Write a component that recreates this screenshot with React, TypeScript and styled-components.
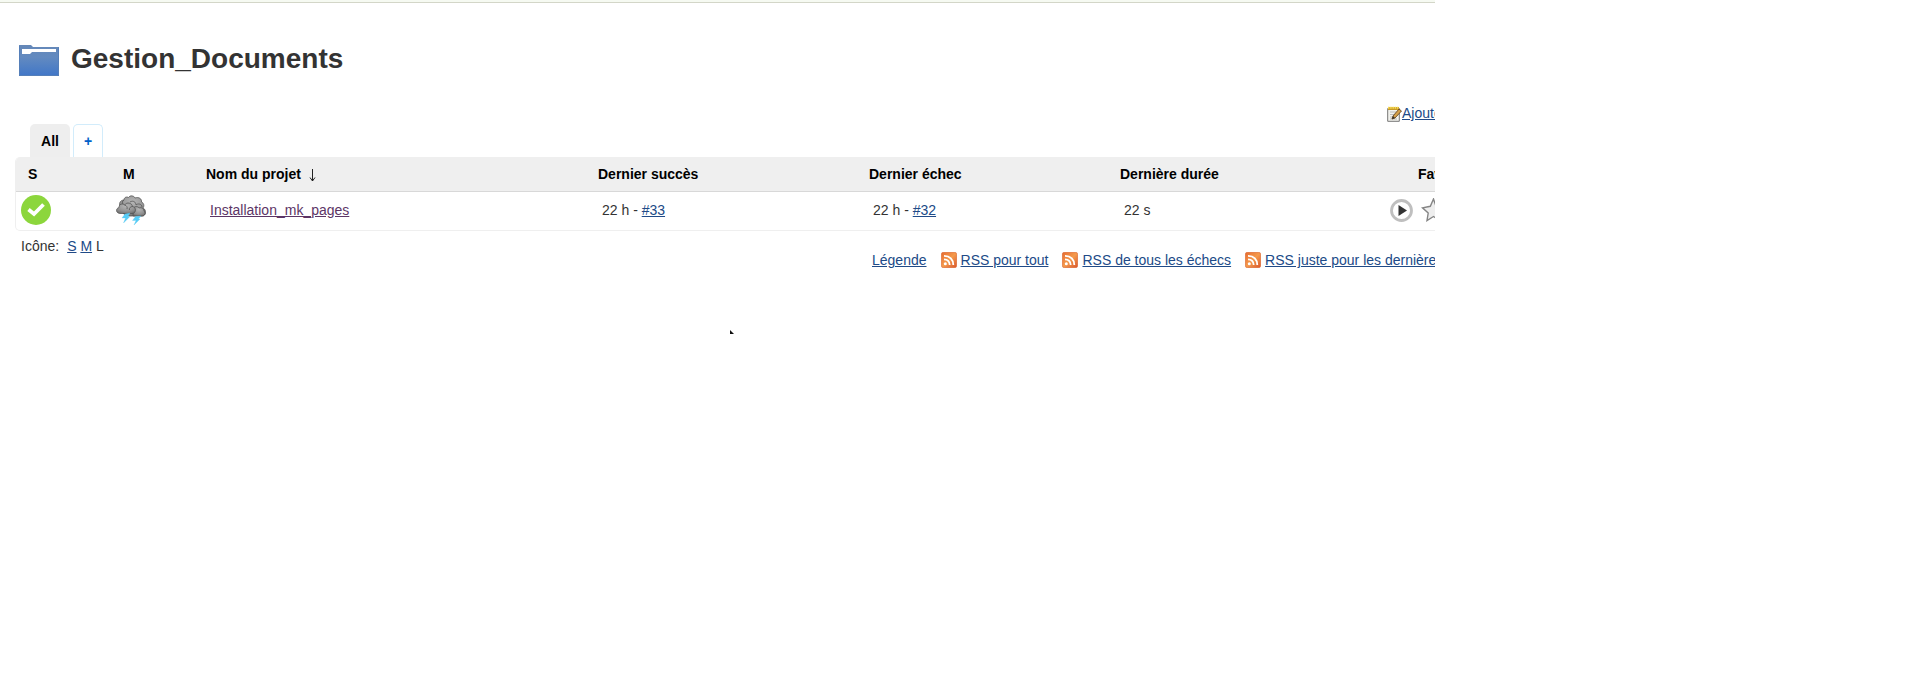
import React from "react";
import styled, { createGlobalStyle } from "styled-components";

const GlobalStyle = createGlobalStyle`
  body {
    margin: 0;
    background: #fff;
    color: #333;
    font: 14px/16px "Liberation Sans", Arial, sans-serif;
  }

  svg {
    flex-shrink: 0;
  }
`;

const Page = styled.main`
  position: relative;
  box-sizing: border-box;
  width: 1435px;
  height: 678px;
  overflow: hidden;
  white-space: nowrap;
  border-top: 2px solid #f6faf2;
`;

const TopRule = styled.div`
  height: 1px;
  background: #d3d6c8;
`;

const Heading = styled.header`
  display: flex;
  align-items: flex-start;
  padding: 42px 0 0 19px;
  height: 57px;
`;

const Title = styled.h1`
  margin: -2px 0 0 12px;
  font-size: 28px;
  line-height: 32px;
  color: #333;
`;

const Link = styled.a<{ $visited?: boolean }>`
  color: ${(p) => (p.$visited ? "#5c3566" : "#204a87")};
  text-decoration: underline;
`;

const EditRow = styled.div`
  display: flex;
  align-items: flex-start;
  height: 19px;
  padding: 3px 0 0 1387px;

  svg {
    margin-top: 1px;
  }
`;

const Tabs = styled.nav`
  display: flex;
  gap: 3px;
  height: 33px;
  padding-left: 30px;
`;

const Tab = styled.div<{ $active?: boolean }>`
  box-sizing: border-box;
  width: ${(p) => (p.$active ? 40 : 30)}px;
  height: 33px;
  padding-top: ${(p) => (p.$active ? 9 : 8)}px;
  border: ${(p) => (p.$active ? "0" : "1px solid #d2ecfb")};
  border-bottom: 0;
  border-radius: 5px 5px 0 0;
  background: ${(p) => (p.$active ? "#eee" : "#fff")};
  color: ${(p) => (p.$active ? "#000" : "#0061c9")};
  font-weight: bold;
  text-align: center;
`;

const Table = styled.section`
  box-sizing: border-box;
  margin-left: 15px;
  width: 1600px;
  height: 74px;
  border: 1px solid #efefef;
  border-top: 0;
  border-radius: 5px;
  overflow: hidden;
`;

const HeadRow = styled.div`
  display: grid;
  grid-template-columns: 95px 83px 392px 271px 251px 285px 1fr;
  align-items: center;
  box-sizing: border-box;
  height: 35px;
  padding-left: 12px;
  background: #efefef;
  border-bottom: 1px solid #d8d8d8;
  color: #000;
  font-weight: bold;
`;

const HeadCell = styled.div<{ $indent?: number }>`
  padding-left: ${(p) => p.$indent ?? 0}px;
`;

const SortArrow = styled.svg`
  margin-left: 4px;
  vertical-align: -3px;
`;

const BodyRow = styled.div`
  display: grid;
  grid-template-columns: 95px 94px 392px 271px 251px 266px 1fr;
  align-items: center;
  height: 36px;
  padding-left: 5px;

  svg {
    display: block;
  }
`;

const Actions = styled.div`
  display: flex;
  align-items: center;
  gap: 8px;
`;

const Footer = styled.footer`
  display: flex;
  align-items: flex-start;
`;

const IconSizes = styled.div`
  flex: 0 0 851px;
  padding: 7px 0 0 21px;
  box-sizing: border-box;

  span {
    margin-right: 8px;
  }
`;

const Feeds = styled.div`
  display: flex;
  flex-shrink: 0;
  padding: 21px 0 0 21px;
`;

const Feed = styled.div`
  display: flex;
  margin-left: 14px;
  gap: 4px;
`;

const Pointer = styled.svg`
  position: absolute;
  left: 728px;
  top: 327px;
`;

const FolderIcon = () => (
  <svg width="40" height="31" viewBox="0 0 40 31">
    <defs>
      <linearGradient id="folder" x2="0" y2="1">
        <stop stopColor="#6588b8" />
        <stop offset=".4" stopColor="#628ac0" />
        <stop offset="1" stopColor="#4076c8" />
      </linearGradient>
    </defs>
    <path d="M0 0H12L14 2H40V31H0Z" fill="url(#folder)" />
    <path d="M3 4H37V7H13L11 9H3Z" fill="#fff" />
    <path d="M.5 1V30.5H39.5V2.5" fill="none" stroke="#557fb9" />
  </svg>
);

const NotepadIcon = () => (
  <svg width="15" height="16" viewBox="0 0 15 16">
    <path d="M.7 2.5H12.3V15.3H.7Z" fill="#f2f2ed" stroke="#777" />
    <path d="M3 6H9M3 8.5H8M3 11H7M3 13H10" stroke="#bbb" />
    <path d="M1 2.5H12" stroke="#c99b25" strokeWidth="3" />
    <path d="M1 1.8H12" stroke="#f7dc5b" strokeWidth="2" strokeDasharray="1.5 .7" />
    <path d="M5 13L6 10L12 3L14.5 5L8 12Z" fill="#d4a04a" stroke="#68461f" strokeWidth=".9" />
    <path d="M5 13L6 10L8 12Z" fill="#333" />
  </svg>
);

const SuccessIcon = () => (
  <svg width="30" height="30" viewBox="0 0 30 30">
    <circle cx="15" cy="15" r="15" fill="#8cd63c" />
    <path d="M7.5 14.5L13 19L22.5 9.5" fill="none" stroke="#fff" strokeWidth="3.8" />
  </svg>
);

const StormIcon = () => (
  <svg width="30" height="30" viewBox="0 0 30 30">
    <defs>
      <radialGradient id="cloud" cx=".5" cy=".3" r=".75">
        <stop stopColor="#b5b5b5" />
        <stop offset=".65" stopColor="#929292" />
        <stop offset="1" stopColor="#707070" />
      </radialGradient>
    </defs>
    <g fill="url(#cloud)" stroke="#4d4d4d" strokeWidth=".7">
      <path d="M5 13C2 9 4 5 8 5C8 2 11 1.5 12.5 2.5C14 0 18 .5 19 3C23 1.5 26 4 25.5 7C28 8 28.5 11 27 13C31 15 30 21 26 21H14C8 21 5 17 5 13Z" />
      <path d="M14 7C17 5 20 7 20 10M20 10C22 8 26 9 26 12M8 5C6 6 6 8 7 9" fill="none" />
      <path d="M17 14C18 11 22 11 23 13C26 12 28 14 28 16C30 18 29 21 26 21H17Z" />
      <path d="M4 18.5C-.5 18 -.5 13.5 3 12.5C3 9 6.5 8 8.5 10C11 6.5 16 8 16.5 11.5C20.5 12 20.5 18.5 16 18.5Z" />
      <path d="M8.5 10C11 10.5 11.5 12.5 11 14M16.5 11.5C14.5 11.5 13 13 13.5 15" fill="none" />
    </g>
    <path d="M9 19L14 18L12 21.5H14L7.5 28L9.5 23H6Z" fill="#55cdf7" stroke="#62c8ee" strokeWidth=".3" />
    <path d="M19.5 21.5L25 21L22.5 24H24L18 30L20 25.5H16.5Z" fill="#55cdf7" stroke="#62c8ee" strokeWidth=".3" />
  </svg>
);

const RssIcon = () => (
  <svg width="16" height="16" viewBox="0 0 16 16">
    <defs>
      <linearGradient id="feed" x2="1" y2="1">
        <stop stopColor="#e66b2f" />
        <stop offset=".5" stopColor="#f49a4c" />
        <stop offset="1" stopColor="#d9562b" />
      </linearGradient>
    </defs>
    <rect x=".3" y=".3" width="15.4" height="15.4" rx="2.2" fill="url(#feed)" stroke="#d9632e" strokeWidth=".6" />
    <circle cx="4.3" cy="11.7" r="1.5" fill="#fff" />
    <path d="M3 7.3Q8.5 7.5 8.7 13M3 3.8Q12 4 12.3 13" fill="none" stroke="#fff" strokeWidth="1.8" />
  </svg>
);

const PlayIcon = () => (
  <svg width="23" height="23" viewBox="0 0 23 23">
    <circle cx="11.5" cy="11.5" r="10" fill="#fff" stroke="#bfbfbf" strokeWidth="2.8" />
    <path d="M8.5 6V17L17 11.5Z" fill="#333" />
  </svg>
);

const StarIcon = () => (
  <svg width="24" height="24" viewBox="0 0 24 24">
    <path d="M12.5 1L15 8.3L23.5 9.4L17 14.6L18.5 22.5L12.5 18.5L6 22.5L7.2 15L1.5 9.8L9.3 8.3Z" fill="#eee" stroke="#858585" strokeWidth="1.4" />
  </svg>
);

export default function App() {
  return (
    <>
      <GlobalStyle />
      <Page>
        <TopRule />
        <Heading>
          <FolderIcon />
          <Title>Gestion_Documents</Title>
        </Heading>
        <EditRow>
          <NotepadIcon />
          <Link>Ajoute</Link>
        </EditRow>
        <Tabs>
          <Tab $active>All</Tab>
          <Tab>+</Tab>
        </Tabs>
        <Table>
          <HeadRow>
            <HeadCell>S</HeadCell>
            <HeadCell>M</HeadCell>
            <HeadCell>
              Nom du projet{" "}
              <SortArrow width="7" height="13" viewBox="0 0 7 13">
                <path d="M3.5 0V12M1 8.5L3.5 12L6 8.5" fill="none" stroke="#222" />
              </SortArrow>
            </HeadCell>
            <HeadCell>Dernier succès</HeadCell>
            <HeadCell>Dernier échec</HeadCell>
            <HeadCell>Dernière durée</HeadCell>
            <HeadCell $indent={13}>Fav</HeadCell>
          </HeadRow>
          <BodyRow>
            <SuccessIcon />
            <StormIcon />
            <Link $visited>Installation_mk_pages</Link>
            <div>22 h - <Link>#33</Link></div>
            <div>22 h - <Link>#32</Link></div>
            <div>22 s</div>
            <Actions>
              <PlayIcon />
              <StarIcon />
            </Actions>
          </BodyRow>
        </Table>
        <Footer>
          <IconSizes>
            <span>Icône:</span><Link>S</Link> <Link>M</Link> L
          </IconSizes>
          <Feeds>
            <Link>Légende</Link>
            <Feed><RssIcon /><Link>RSS pour tout</Link></Feed>
            <Feed><RssIcon /><Link>RSS de tous les échecs</Link></Feed>
            <Feed><RssIcon /><Link>RSS juste pour les dernière</Link></Feed>
          </Feeds>
        </Footer>
        <Pointer width="8" height="5" viewBox="0 0 8 5">
          <path d="M2 1L6 5H2Z" fill="#111" />
        </Pointer>
      </Page>
    </>
  );
}
